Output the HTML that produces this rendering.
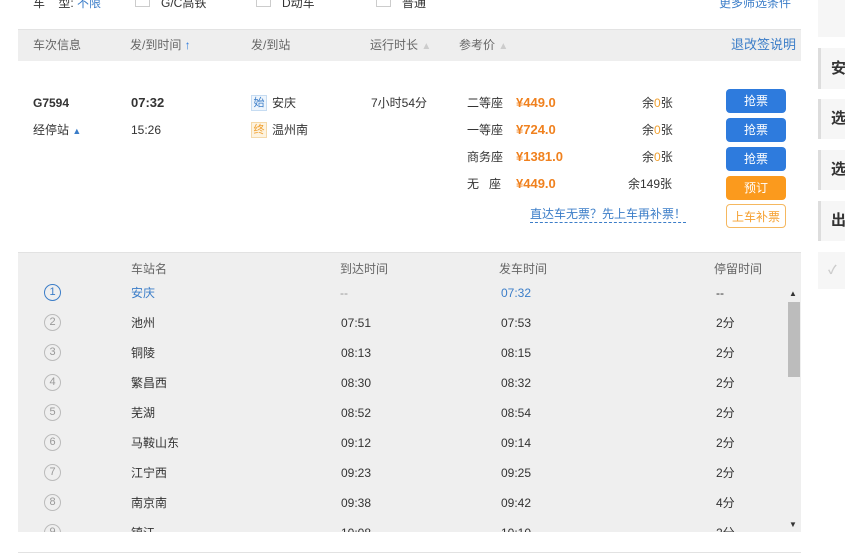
<!DOCTYPE html>
<html><head><meta charset="utf-8"><style>
*{margin:0;padding:0;box-sizing:border-box}
body{width:845px;height:556px;overflow:hidden;background:#fff;font-family:"Liberation Sans","Noto Sans CJK SC",sans-serif;font-size:12px;color:#333;position:relative}
.a{position:absolute;white-space:nowrap;line-height:16px}
.blue{color:#3b7dc8}
.hdr{position:absolute;left:18px;top:29px;width:783px;height:32px;background:#eee;border-top:1px solid #e3e3e3}
.btn{position:absolute;left:726px;width:60px;height:24px;border-radius:4px;background:#2e7bdd;color:#fff;text-align:center;line-height:24px;font-size:12px}
.pr{color:#f0811e;font-weight:bold;font-size:13px}
.stops{position:absolute;left:18px;top:252px;width:783px;height:280px;background:#efefef;border-top:1px solid #e2e2e2;overflow:hidden}
.circ{position:absolute;left:26px;width:17px;height:17px;border:1px solid #bbb;border-radius:50%;font-size:11px;text-align:center;line-height:15px;color:#999}
.side{position:absolute;left:818px;width:27px;background:#f6f6f6;border-left:3px solid #ddd;font-size:15px;font-weight:bold;color:#333;padding-left:10px}
</style></head><body>
<div class="a" style="left:33px;top:-5px;font-size:12px">车 &nbsp; &nbsp;型: <span class="blue">不限</span></div>
<div class="a" style="left:135px;top:-8px;width:15px;height:15px;border:1px solid #ccc"></div>
<div class="a" style="left:161px;top:-5px">G/C高铁</div>
<div class="a" style="left:256px;top:-8px;width:15px;height:15px;border:1px solid #ccc"></div>
<div class="a" style="left:282px;top:-5px">D动车</div>
<div class="a" style="left:376px;top:-8px;width:15px;height:15px;border:1px solid #ccc"></div>
<div class="a" style="left:402px;top:-5px">普通</div>
<div class="a blue" style="left:719px;top:-5px">更多筛选条件</div>

<div class="hdr"></div>
<div class="a" style="left:33px;top:37px;color:#666">车次信息</div>
<div class="a" style="left:130px;top:37px;color:#666">发/到时间 <span style="color:#2e7bdd;font-weight:bold">↑</span></div>
<div class="a" style="left:251px;top:37px;color:#666">发/到站</div>
<div class="a" style="left:370px;top:37px;color:#666">运行时长 <span style="color:#ccc;font-size:10px">▲</span></div>
<div class="a" style="left:459px;top:37px;color:#666">参考价 <span style="color:#ccc;font-size:10px">▲</span></div>
<div class="a blue" style="left:731px;top:37px;font-size:13px">退改签说明</div>

<div class="a" style="left:33px;top:95px;font-weight:bold;font-size:12px">G7594</div>
<div class="a" style="left:33px;top:122px">经停站 <span style="color:#3b7dc8;font-size:9px">▲</span></div>
<div class="a" style="left:131px;top:95px;font-weight:bold;font-size:13px">07:32</div>
<div class="a" style="left:131px;top:122px">15:26</div>
<div class="a" style="left:251px;top:95px;width:16px;height:16px;border:1px solid #c6dcf2;background:#eef5fc;color:#3b7dc8;font-size:11px;text-align:center;line-height:14px">始</div>
<div class="a" style="left:272px;top:95px">安庆</div>
<div class="a" style="left:251px;top:122px;width:16px;height:16px;border:1px solid #f5d9a8;background:#fdf3e0;color:#f0a030;font-size:11px;text-align:center;line-height:14px">终</div>
<div class="a" style="left:272px;top:122px">温州南</div>
<div class="a" style="left:371px;top:95px">7小时54分</div>

<div class="a" style="left:467px;top:95px">二等座</div><div class="a pr" style="left:516px;top:95px">¥449.0</div><div class="a" style="left:642px;top:95px">余<span style="color:#f0a030">0</span>张</div>
<div class="a" style="left:467px;top:122px">一等座</div><div class="a pr" style="left:516px;top:122px">¥724.0</div><div class="a" style="left:642px;top:122px">余<span style="color:#f0a030">0</span>张</div>
<div class="a" style="left:467px;top:149px">商务座</div><div class="a pr" style="left:516px;top:149px">¥1381.0</div><div class="a" style="left:642px;top:149px">余<span style="color:#f0a030">0</span>张</div>
<div class="a" style="left:467px;top:176px">无 &nbsp; 座</div><div class="a pr" style="left:516px;top:176px">¥449.0</div><div class="a" style="left:628px;top:176px">余149张</div>
<div class="btn" style="top:89px">抢票</div>
<div class="btn" style="top:118px">抢票</div>
<div class="btn" style="top:147px">抢票</div>
<div class="btn" style="top:176px;background:#fb9a1d">预订</div>
<div class="btn" style="top:204px;background:#fff;border:1px solid #f5b860;color:#f5a030">上车补票</div>
<div class="a blue" style="left:530px;top:206px;border-bottom:1px dashed #3b7dc8">直达车无票？先上车再补票！</div>

<div class="stops">
<div class="a" style="left:113px;top:8px;color:#666">车站名</div>
<div class="a" style="left:322px;top:8px;color:#666">到达时间</div>
<div class="a" style="left:481px;top:8px;color:#666">发车时间</div>
<div class="a" style="left:696px;top:8px;color:#666">停留时间</div>
<div class="circ" style="top:31px;border-color:#3b7dc8;color:#3b7dc8">1</div>
<div class="a blue" style="left:113px;top:32px">安庆</div><div class="a" style="left:322px;top:32px;color:#999">--</div><div class="a blue" style="left:483px;top:32px">07:32</div><div class="a" style="left:698px;top:32px">--</div>
<div class="circ" style="top:61px">2</div><div class="a" style="left:113px;top:62px">池州</div><div class="a" style="left:323px;top:62px">07:51</div><div class="a" style="left:483px;top:62px">07:53</div><div class="a" style="left:698px;top:62px">2分</div>
<div class="circ" style="top:91px">3</div><div class="a" style="left:113px;top:92px">铜陵</div><div class="a" style="left:323px;top:92px">08:13</div><div class="a" style="left:483px;top:92px">08:15</div><div class="a" style="left:698px;top:92px">2分</div>
<div class="circ" style="top:121px">4</div><div class="a" style="left:113px;top:122px">繁昌西</div><div class="a" style="left:323px;top:122px">08:30</div><div class="a" style="left:483px;top:122px">08:32</div><div class="a" style="left:698px;top:122px">2分</div>
<div class="circ" style="top:151px">5</div><div class="a" style="left:113px;top:152px">芜湖</div><div class="a" style="left:323px;top:152px">08:52</div><div class="a" style="left:483px;top:152px">08:54</div><div class="a" style="left:698px;top:152px">2分</div>
<div class="circ" style="top:181px">6</div><div class="a" style="left:113px;top:182px">马鞍山东</div><div class="a" style="left:323px;top:182px">09:12</div><div class="a" style="left:483px;top:182px">09:14</div><div class="a" style="left:698px;top:182px">2分</div>
<div class="circ" style="top:211px">7</div><div class="a" style="left:113px;top:212px">江宁西</div><div class="a" style="left:323px;top:212px">09:23</div><div class="a" style="left:483px;top:212px">09:25</div><div class="a" style="left:698px;top:212px">2分</div>
<div class="circ" style="top:241px">8</div><div class="a" style="left:113px;top:242px">南京南</div><div class="a" style="left:323px;top:242px">09:38</div><div class="a" style="left:483px;top:242px">09:42</div><div class="a" style="left:698px;top:242px">4分</div>
<div class="circ" style="top:271px">9</div><div class="a" style="left:113px;top:272px">镇江</div><div class="a" style="left:323px;top:272px">10:08</div><div class="a" style="left:483px;top:272px">10:10</div><div class="a" style="left:698px;top:272px">2分</div>
<div class="a" style="left:771px;top:33px;font-size:8px;color:#333">▲</div>
<div class="a" style="left:770px;top:49px;width:12px;height:75px;background:#bcbcbc"></div>
<div class="a" style="left:771px;top:264px;font-size:8px;color:#333">▼</div>
</div>
<div class="a" style="left:18px;top:552px;width:783px;height:1px;background:#e2e2e2"></div>

<div class="side" style="top:0;height:37px;border-left-color:#f6f6f6"></div>
<div class="side" style="top:48px;height:41px;line-height:41px">安</div>
<div class="side" style="top:99px;height:40px;line-height:40px">选</div>
<div class="side" style="top:150px;height:40px;line-height:40px">选</div>
<div class="side" style="top:201px;height:40px;line-height:40px">出</div>
<div class="side" style="top:252px;height:37px;border-left:none;color:#ccc;font-size:12px;line-height:37px">✓</div>
</body></html>
